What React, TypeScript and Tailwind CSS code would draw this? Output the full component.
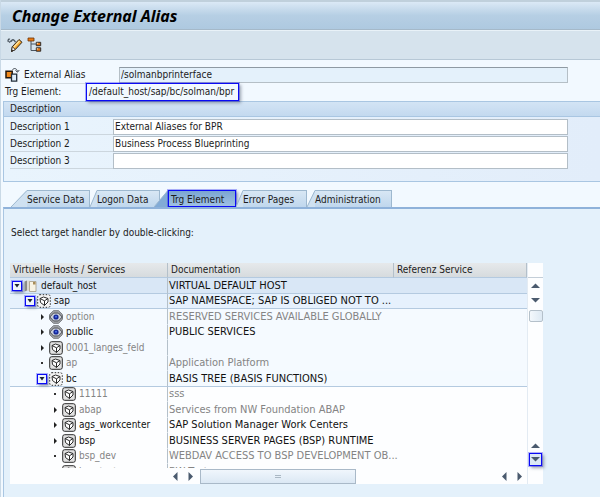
import React from 'react';
import clsx from 'clsx';

type NodeKind = 'folder' | 'active' | 'eye' | 'cube';
type NodeState = 'open' | 'closed' | 'leaf';

interface ServiceNode {
  name: string;
  doc: string;
  level: number;
  kind: NodeKind;
  state: NodeState;
  disabled?: boolean;
  row?: string;
}

const services: ServiceNode[] = [
  { name: 'default_host', doc: 'VIRTUAL DEFAULT HOST', level: 0, kind: 'folder', state: 'open', row: 'bg-[#d9e7f6] border-[#b4cae0]' },
  { name: 'sap', doc: 'SAP NAMESPACE; SAP IS OBLIGED NOT TO ...', level: 1, kind: 'active', state: 'open', row: 'bg-[#e6f1fd] border-[#b4cae0]' },
  { name: 'option', doc: 'RESERVED SERVICES AVAILABLE GLOBALLY', level: 2, kind: 'eye', state: 'closed', disabled: true },
  { name: 'public', doc: 'PUBLIC SERVICES', level: 2, kind: 'eye', state: 'closed' },
  { name: '0001_langes_feld', doc: '', level: 2, kind: 'cube', state: 'closed', disabled: true },
  { name: 'ap', doc: 'Application Platform', level: 2, kind: 'cube', state: 'leaf', disabled: true },
  { name: 'bc', doc: 'BASIS TREE (BASIS FUNCTIONS)', level: 2, kind: 'active', state: 'open', row: 'bg-[#f4faff] border-[#b4cae0]' },
  { name: '11111', doc: 'sss', level: 3, kind: 'cube', state: 'leaf', disabled: true },
  { name: 'abap', doc: 'Services from NW Foundation ABAP', level: 3, kind: 'cube', state: 'closed', disabled: true },
  { name: 'ags_workcenter', doc: 'SAP Solution Manager Work Centers', level: 3, kind: 'cube', state: 'closed' },
  { name: 'bsp', doc: 'BUSINESS SERVER PAGES (BSP) RUNTIME', level: 3, kind: 'cube', state: 'closed' },
  { name: 'bsp_dev', doc: 'WEBDAV ACCESS TO BSP DEVELOPMENT OB...', level: 3, kind: 'cube', state: 'leaf', disabled: true },
  { name: 'bsp_test', doc: 'BW Test', level: 3, kind: 'cube', state: 'leaf', disabled: true },
];

const indents = ['pl-[2px]', 'pl-[15px]', 'pl-[27px]', 'pl-[40px]'];

const rowTone = (level: number) =>
  level === 3 ? 'bg-[#fdfeff] border-transparent' : 'bg-[#f5faff] border-transparent';

const descriptions = [
  { label: 'Description 1', value: 'External Aliases for BPR' },
  { label: 'Description 2', value: 'Business Process Blueprinting' },
  { label: 'Description 3', value: '' },
];

const tabs = [
  { label: 'Service Data', slant: 'w-4', width: 'w-[79px]' },
  { label: 'Logon Data', slant: 'w-[7px]', width: 'w-[70px]' },
  { label: 'Trg Element', slant: 'w-[14px]', width: 'w-[82px] -ml-[6px]', active: true },
  { label: 'Error Pages', slant: 'w-[7px]', width: 'w-[71px]' },
  { label: 'Administration', slant: 'w-2', width: 'w-[85px]' },
];

const highlight = 'border border-[#0a0af5] outline outline-[#0a0af5]/30 shadow-[2px_2px_3px_0px_rgba(70,80,100,0.5)]';

const PencilIcon = () => (
  <svg className="w-4 h-4" viewBox="0 0 16 16" fill="none">
    <path d="M1.5 5C.5 3.500 1.500 1.500 3 2.300M2.500 5.800c0-1.500 1.500-2.300 2.500-1.300M4.500 4.500c0-1.500 1.500-2.300 2.500-1.300L8.500 5" stroke="#4b565f" strokeWidth="1.300" />
    <path d="M4.500 14.500l.8-4.800L12 2.500l3 2.800-6.700 7.200z" fill="#f7a62b" stroke="#2a2118" strokeLinejoin="round" />
    <path d="M6.500 10.500l6-6.500" stroke="#ffe3a0" strokeWidth="1.400" />
    <path d="M4.500 14.500l.8-4.800 3 2.800z" fill="#fff" stroke="#2a2118" strokeWidth=".8" />
    <path d="M4.500 14.500l.4-2 1.300 1.200z" fill="#2a2118" />
  </svg>
);

const HierarchyIcon = () => (
  <svg className="w-4 h-4" viewBox="0 0 16 16" fill="none">
    <path d="M4 4v9.500h5M4 7h5" stroke="#4b5560" />
    <path d="M1 1h6v3H1z" fill="#e87a12" stroke="#6b3208" strokeWidth=".8" />
    <path d="M9.300 5.300h4.400v3.400H9.300z" fill="#e8730c" stroke="#2c2c2c" />
    <path d="M9.300 10.800h4.400v3.400H9.300z" fill="#e8730c" stroke="#2c2c2c" />
    <path d="M9.800 5.800h1.400v1.200H9.800zM9.800 11.300h1.400v1.200H9.800z" fill="#f6d0a0" />
  </svg>
);

const AliasIcon = () => (
  <svg className="w-4 h-4" viewBox="0 0 16 16" fill="none">
    <path d="M1 4.200h6.200v6.500H1z" fill="#f28a1c" stroke="#24180d" strokeWidth="1.500" />
    <path d="M6.500 7.200h5.200v7H6.500z" fill="#dfeefb" stroke="#24303c" strokeWidth="1.300" />
    <path d="M7.500 2.800C9 .5 12 1.500 12.500 4.500M10.500 3.500l2 1.700L14.300 3" stroke="#3c444c" />
  </svg>
);

const NodeIcon = ({ kind }: { kind: NodeKind }) => {
  if (kind === 'folder') {
    return (
      <svg className="w-[13px] h-[14px] shrink-0" viewBox="0 0 13 14">
        <path d="M.5 2.500L3 1.500v10l-2.500 1z" fill="#8b8c88" />
        <path d="M3 1.500h3v10.500H3z" fill="#dcdad2" />
        <path d="M5.500 2.500h6.500v10H5.500z" fill="#f7f3e4" stroke="#a39a84" strokeWidth=".8" />
        <path d="M9 3h2.500v2.500H9z" fill="#a88d58" />
      </svg>
    );
  }
  if (kind === 'eye') {
    return (
      <svg className="w-[14px] h-[14px] shrink-0" viewBox="0 0 14 14">
        <path d="M4.500.8h5L13.300 4.500v5L9.500 13.200h-5L.7 9.500v-5z" fill="#b3b6ba" stroke="#55575b" strokeWidth=".9" />
        <path d="M.8 7L4.500 3h5L13.200 7 9.500 11h-5z" fill="#c9ced8" stroke="#3a3c42" strokeWidth=".9" />
        <circle cx="7" cy="7" r="2.600" fill="#16289a" />
        <circle cx="7" cy="6.800" r="1" fill="#4f78ee" />
      </svg>
    );
  }
  return (
    <svg className="w-[14px] h-[14px] shrink-0" viewBox="0 0 14 14" fill="none">
      <rect
        x=".7"
        y=".7"
        width="12.600"
        height="12.600"
        rx="2"
        fill={kind === 'active' ? '#f5f5f5' : '#e2e2e2'}
        stroke="#2b2b2b"
        strokeDasharray={kind === 'active' ? '1.500 1.500' : undefined}
      />
      <path d="M3 4.500L6.500 3l4.500 1.500v3.500L7.500 11.500 3.500 8.500z" fill="#fff" stroke="#2a2a2a" />
      <path d="M3 4.500l4.500 2.300L11 4.500M7.500 6.800v4.700" stroke="#2a2a2a" />
    </svg>
  );
};

const Expander = ({ state, name }: { state: NodeState; name: string }) => {
  if (state === 'leaf') {
    return (
      <span className="w-[10px] flex justify-center shrink-0">
        <span className="w-[2px] h-[2px] bg-[#333333]" />
      </span>
    );
  }
  return (
    <button
      type="button"
      aria-label={`Toggle ${name}`}
      className={clsx(
        'w-[10px] h-[10px] flex items-center justify-center shrink-0',
        state === 'open' && 'bg-[#eef4fb] ' + highlight
      )}
    >
      {state === 'open' ? (
        <svg className="w-[6px] h-1" viewBox="0 0 6 4"><path d="M.5 0h5L3 3.500z" fill="#1b2430" /></svg>
      ) : (
        <svg className="w-[3px] h-[6px]" viewBox="0 0 3 6"><path d="M0 0l3 3-3 3z" fill="#222222" /></svg>
      )}
    </button>
  );
};

const arrows = {
  up: 'M0 7h9L4.500 2.500z',
  down: 'M0 2h9L4.500 6.500z',
  left: 'M6.500 0v9L2 4.500z',
  right: 'M2.500 0v9L7 4.500z',
};

const ScrollButton = ({ dir, marked }: { dir: keyof typeof arrows; marked?: boolean }) => (
  <button
    type="button"
    aria-label={`Scroll ${dir}`}
    className={clsx(
      'flex items-center justify-center shrink-0',
      marked ? 'w-[13px] h-[13px] bg-[#dbe8f5] ' + highlight : 'w-[15px] h-[15px]'
    )}
  >
    <svg className="w-[9px] h-[9px]" viewBox="0 0 9 9"><path d={arrows[dir]} fill="#4a5a6e" /></svg>
  </button>
);

const Tab = ({ label, slant, width, active }: { label: string; slant: string; width: string; active?: boolean }) => (
  <button type="button" role="tab" aria-selected={!!active} className={clsx('flex h-[17px] shrink-0', width)}>
    <svg className={clsx('h-full shrink-0', slant)} viewBox="0 0 16 17" preserveAspectRatio="none">
      <path d="M0 17L16 0v17z" fill={active ? '#82abd6' : '#cfe1f1'} />
      <path d="M0 17L16 .5" stroke="#9db8cf" vectorEffect="non-scaling-stroke" />
    </svg>
    <span
      className={clsx(
        'flex-1 h-[17px] leading-[17px] text-left whitespace-nowrap',
        active
          ? 'bg-linear-to-b from-[#7ba5d1] to-[#9fc1e4] pl-[2px] ' + highlight
          : 'bg-linear-to-b from-[#d8e7f4] to-[#c0d7ed] border-t border-r border-[#9db8cf]'
      )}
    >
      {label}
    </span>
  </button>
);

const App: React.FC = () => {
  return (
    <div className="min-h-screen flex flex-col bg-[#f2f9ff] border-l border-[#c9d9e6] text-[10px] leading-[16px] text-[#1c1c1c] font-['DejaVu_Sans_Condensed','DejaVu_Sans',sans-serif] overflow-hidden">
      <header className="h-[30px] flex items-center pl-[11px] border-t-2 border-b border-t-[#c0d0dc] border-b-[#a5b9c9] bg-linear-to-b from-[#dbe9f6] via-[#b6cfe4] to-[#aec9e0]">
        <h1 className="text-[16px] leading-[20px] font-bold italic text-black whitespace-nowrap font-['Noto_Sans',sans-serif]">Change External Alias</h1>
      </header>

      <div className="h-[30px] flex items-center gap-1 pl-[6px] bg-[#d6e3ed] border-t border-b border-t-[#e9f2f8] border-b-[#b7c8d6]">
        <button type="button" aria-label="Display / Change"><PencilIcon /></button>
        <button type="button" aria-label="Hierarchy"><HierarchyIcon /></button>
      </div>

      <div className="pt-[7px] pl-1 pr-8">
        <div className="flex items-center h-4">
          <AliasIcon />
          <label htmlFor="alias" className="ml-[3px] w-[91px] border-b border-[#d2dae0] leading-[16px]">External Alias</label>
          <input
            id="alias"
            readOnly
            defaultValue="/solmanbprinterface"
            className="ml-[4px] flex-1 h-4 px-px bg-[#e4f1fb] border border-t-[#8f9aa3] border-[#b5bfc6] outline-none"
          />
        </div>
        <div className="flex items-center h-[18px]">
          <span className="w-[81px]">Trg Element:</span>
          <span className={clsx('relative h-[18px] pl-[2px] pr-1 leading-[16px]', highlight)}>/default_host/sap/bc/solman/bpr</span>
        </div>
      </div>

      <section className="ml-[2px] h-[81px] border border-r-0 border-[#a9c6e2] bg-linear-to-r from-[#e9f4fd] to-[#e2edfa]">
        <h2 className="h-[15px] pl-[6px] leading-[14px] bg-linear-to-b from-[#d3e4f5] to-[#c3d9ef] border-b border-[#a9c6e2]">Description</h2>
        <div className="pt-[2px] pl-[6px] pr-8 space-y-px">
          {descriptions.map((row, i) => (
            <div key={row.label} className="flex h-4">
              <label htmlFor={`desc-${i}`} className="w-[103px] border-b border-[#ccd6de] leading-[16px]">{row.label}</label>
              <input
                id={`desc-${i}`}
                defaultValue={row.value}
                className="flex-1 h-4 px-px bg-white border border-[#b3bec7] outline-none"
              />
            </div>
          ))}
        </div>
      </section>

      <div role="tablist" className="flex mt-2 pl-[10px] items-end">
        {tabs.map((tab) => <Tab key={tab.label} {...tab} />)}
      </div>

      <main className="flex-1 ml-[2px] pl-[6px] pr-[57px] pb-[14px] border-t-2 border-l border-t-[#8fb2da] border-l-[#a9c6e2] bg-[#e4f1fb]">
        <p className="pt-4 pl-px h-[54px]">Select target handler by double-clicking:</p>

        <div className="flex bg-[#fdfeff]">
          <div className="flex-1 min-w-0">
            <div className="h-[205px] overflow-hidden">
              <table className="w-full table-fixed border-separate border-spacing-0">
                <colgroup>
                  <col className="w-[158px]" />
                  <col className="w-[226px]" />
                  <col />
                </colgroup>
                <thead>
                  <tr className="bg-linear-to-b from-[#e6e9eb] to-[#d5dadd] text-left leading-[14px]">
                    {['Virtuelle Hosts / Services', 'Documentation', 'Referenz Service'].map((title) => (
                      <th key={title} className="py-0 pl-[3px] font-normal border-r border-b border-r-[#b4c0ca] border-b-[#b4cae0] whitespace-nowrap">{title}</th>
                    ))}
                  </tr>
                </thead>
                <tbody>
                  {services.map((node) => (
                    <tr
                      key={node.name}
                      className={clsx(
                        'odd:h-4 even:h-[15px] leading-[14px] whitespace-nowrap',
                        node.row ?? rowTone(node.level),
                        node.disabled ? 'text-[#848484]' : 'text-[#111111]'
                      )}
                    >
                      <td className="p-0 border-b border-r border-b-inherit border-r-[#b4c0ca]">
                        <div className={clsx('h-[14px] flex items-center', indents[node.level])}>
                          <Expander state={node.state} name={node.name} />
                          <span className="ml-[2px] w-[17px] flex"><NodeIcon kind={node.kind} /></span>
                          {node.name}
                        </div>
                      </td>
                      <td className="py-0 pl-px pr-0 text-[11px] leading-[14px] border-b border-b-inherit">{node.doc}</td>
                      <td className="p-0 border-b border-b-inherit" />
                    </tr>
                  ))}
                </tbody>
              </table>
            </div>
            <div className="flex h-4 items-center pl-[158px] bg-[#fdfeff]">
              <ScrollButton dir="left" />
              <ScrollButton dir="right" />
              <div className="ml-[2px] w-[156px] h-[15px] flex items-center justify-center bg-linear-to-b from-[#f0f6fc] to-[#dbe8f4] border border-[#a9b9c8]">
                <span className="w-[6px] h-[3px] border-y border-[#aab8c4]" />
              </div>
              <div className="ml-auto flex">
                <ScrollButton dir="left" />
                <ScrollButton dir="right" />
              </div>
            </div>
          </div>

          <div className="w-4 flex flex-col items-center border-l border-[#e3ebf3]">
            <div className="self-stretch h-[15px] shrink-0 border-b border-[#c3ced8]" />
            <ScrollButton dir="up" />
            <ScrollButton dir="down" />
            <div className="mt-[2px] w-[14px] h-3 rounded-[2px] border border-[#b4c0ca] bg-linear-to-r from-[#f3f8fc] to-[#dde9f3]" />
            <div className="flex-1" />
            <ScrollButton dir="up" />
            <ScrollButton dir="down" marked />
            <div className="h-[18px] shrink-0" />
          </div>
        </div>
      </main>
    </div>
  );
};

export default App;
